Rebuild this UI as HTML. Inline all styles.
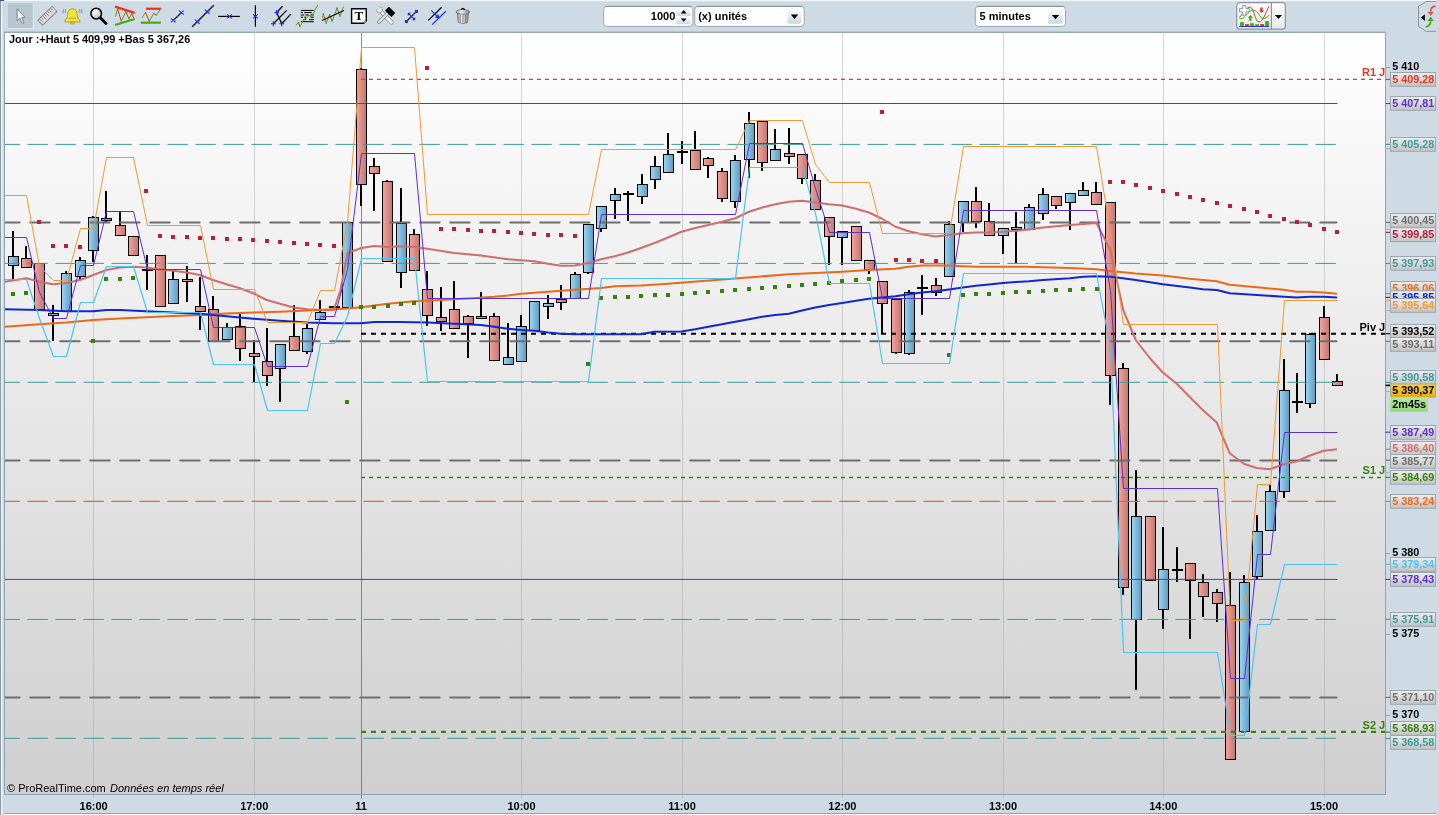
<!DOCTYPE html>
<html lang="fr"><head><meta charset="utf-8"><title>ProRealTime</title>
<style>html,body{margin:0;padding:0;background:#cedbe5;overflow:hidden}body{width:1439px;height:815px;position:relative;font-family:"Liberation Sans",Arial,sans-serif}</style>
</head><body>
<svg width="1439" height="815" viewBox="0 0 1439 815" style="position:absolute;left:0;top:0;will-change:transform" font-family="Liberation Sans, Arial, sans-serif">
<defs>
<linearGradient id="bg" x1="0" y1="0" x2="0" y2="1"><stop offset="0" stop-color="#ffffff"/><stop offset="1" stop-color="#cfcfcf"/></linearGradient>
<linearGradient id="gb" x1="0" y1="0" x2="1" y2="0"><stop offset="0" stop-color="#9ed6f2"/><stop offset="1" stop-color="#5d9bc1"/></linearGradient>
<linearGradient id="gr" x1="0" y1="0" x2="1" y2="0"><stop offset="0" stop-color="#f3a59e"/><stop offset="1" stop-color="#c17670"/></linearGradient>
<linearGradient id="lab" x1="0" y1="0" x2="0" y2="1"><stop offset="0" stop-color="#ededed"/><stop offset="1" stop-color="#c3c3c3"/></linearGradient>
<linearGradient id="btn" x1="0" y1="0" x2="0" y2="1"><stop offset="0" stop-color="#ffffff"/><stop offset="1" stop-color="#f2f2f2"/></linearGradient>
<clipPath id="cc"><rect x="4.5" y="32.5" width="1381.0" height="762.0"/></clipPath>
</defs>
<rect x="0" y="0" width="1439" height="815" fill="#cedbe5"/>
<rect x="4.5" y="32.5" width="1381.0" height="762.0" fill="url(#bg)"/>
<line x1="93.5" y1="32.5" x2="93.5" y2="798.5" stroke="#9a9a9a" stroke-opacity="0.4" stroke-width="1"/>
<line x1="254.5" y1="32.5" x2="254.5" y2="798.5" stroke="#9a9a9a" stroke-opacity="0.4" stroke-width="1"/>
<line x1="361.5" y1="32.5" x2="361.5" y2="798.5" stroke="#5a5a5a" stroke-opacity="0.68" stroke-width="1"/>
<line x1="521.5" y1="32.5" x2="521.5" y2="798.5" stroke="#9a9a9a" stroke-opacity="0.4" stroke-width="1"/>
<line x1="682.5" y1="32.5" x2="682.5" y2="798.5" stroke="#9a9a9a" stroke-opacity="0.4" stroke-width="1"/>
<line x1="842.5" y1="32.5" x2="842.5" y2="798.5" stroke="#9a9a9a" stroke-opacity="0.4" stroke-width="1"/>
<line x1="1003.5" y1="32.5" x2="1003.5" y2="798.5" stroke="#9a9a9a" stroke-opacity="0.4" stroke-width="1"/>
<line x1="1163.5" y1="32.5" x2="1163.5" y2="798.5" stroke="#9a9a9a" stroke-opacity="0.4" stroke-width="1"/>
<line x1="1324.5" y1="32.5" x2="1324.5" y2="798.5" stroke="#9a9a9a" stroke-opacity="0.4" stroke-width="1"/>
<g clip-path="url(#cc)">
<line x1="13" y1="231" x2="13" y2="279" stroke="#000" stroke-width="2"/>
<rect x="8.5" y="256.5" width="10" height="9.0" fill="url(#gb)" stroke="#000" stroke-width="1"/>
<line x1="26" y1="246" x2="26" y2="268" stroke="#000" stroke-width="2"/>
<rect x="21.5" y="258.5" width="10" height="9.0" fill="url(#gr)" stroke="#000" stroke-width="1"/>
<line x1="39" y1="264" x2="39" y2="309" stroke="#000" stroke-width="2"/>
<rect x="34.5" y="263.5" width="10" height="46.0" fill="url(#gr)" stroke="#000" stroke-width="1"/>
<line x1="53" y1="305" x2="53" y2="341" stroke="#000" stroke-width="2"/>
<rect x="48.5" y="313.5" width="10" height="2.0" fill="url(#gb)" stroke="#000" stroke-width="1"/>
<line x1="66" y1="271" x2="66" y2="311" stroke="#000" stroke-width="2"/>
<rect x="61.5" y="273.5" width="10" height="38.0" fill="url(#gb)" stroke="#000" stroke-width="1"/>
<line x1="80" y1="257" x2="80" y2="280" stroke="#000" stroke-width="2"/>
<rect x="75.5" y="260.5" width="10" height="16.0" fill="url(#gb)" stroke="#000" stroke-width="1"/>
<line x1="93" y1="216" x2="93" y2="262" stroke="#000" stroke-width="2"/>
<rect x="88.5" y="217.5" width="10" height="33.0" fill="url(#gb)" stroke="#000" stroke-width="1"/>
<line x1="106" y1="191" x2="106" y2="222" stroke="#000" stroke-width="2"/>
<rect x="101.5" y="218.5" width="10" height="2.0" fill="url(#gr)" stroke="#000" stroke-width="1"/>
<line x1="120" y1="212" x2="120" y2="236" stroke="#000" stroke-width="2"/>
<rect x="115.5" y="225.5" width="10" height="10.0" fill="url(#gr)" stroke="#000" stroke-width="1"/>
<line x1="133" y1="236" x2="133" y2="255" stroke="#000" stroke-width="2"/>
<rect x="128.5" y="236.5" width="10" height="19.0" fill="url(#gr)" stroke="#000" stroke-width="1"/>
<line x1="147" y1="255" x2="147" y2="290" stroke="#000" stroke-width="2"/>
<rect x="142" y="269" width="11" height="2" fill="#000"/>
<line x1="160" y1="255" x2="160" y2="306" stroke="#000" stroke-width="2"/>
<rect x="155.5" y="255.5" width="10" height="51.0" fill="url(#gr)" stroke="#000" stroke-width="1"/>
<line x1="173" y1="270" x2="173" y2="303" stroke="#000" stroke-width="2"/>
<rect x="168.5" y="279.5" width="10" height="24.0" fill="url(#gb)" stroke="#000" stroke-width="1"/>
<line x1="187" y1="266" x2="187" y2="302" stroke="#000" stroke-width="2"/>
<rect x="182.5" y="279.5" width="10" height="2.0" fill="url(#gr)" stroke="#000" stroke-width="1"/>
<line x1="200" y1="277" x2="200" y2="330" stroke="#000" stroke-width="2"/>
<rect x="195.5" y="306.5" width="10" height="5.0" fill="url(#gr)" stroke="#000" stroke-width="1"/>
<line x1="213" y1="296" x2="213" y2="342" stroke="#000" stroke-width="2"/>
<rect x="208.5" y="309.5" width="10" height="32.0" fill="url(#gr)" stroke="#000" stroke-width="1"/>
<line x1="227" y1="323" x2="227" y2="339" stroke="#000" stroke-width="2"/>
<rect x="222.5" y="327.5" width="10" height="12.0" fill="url(#gb)" stroke="#000" stroke-width="1"/>
<line x1="240" y1="314" x2="240" y2="361" stroke="#000" stroke-width="2"/>
<rect x="235.5" y="326.5" width="10" height="22.0" fill="url(#gr)" stroke="#000" stroke-width="1"/>
<line x1="254" y1="340" x2="254" y2="382" stroke="#000" stroke-width="2"/>
<rect x="249.5" y="353.5" width="10" height="3.0" fill="url(#gr)" stroke="#000" stroke-width="1"/>
<line x1="267" y1="328" x2="267" y2="386" stroke="#000" stroke-width="2"/>
<rect x="262.5" y="361.5" width="10" height="14.0" fill="url(#gr)" stroke="#000" stroke-width="1"/>
<line x1="280" y1="344" x2="280" y2="402" stroke="#000" stroke-width="2"/>
<rect x="275.5" y="344.5" width="10" height="24.0" fill="url(#gb)" stroke="#000" stroke-width="1"/>
<line x1="294" y1="305" x2="294" y2="350" stroke="#000" stroke-width="2"/>
<rect x="289.5" y="336.5" width="10" height="14.0" fill="url(#gr)" stroke="#000" stroke-width="1"/>
<line x1="307" y1="324" x2="307" y2="354" stroke="#000" stroke-width="2"/>
<rect x="302.5" y="328.5" width="10" height="23.0" fill="url(#gb)" stroke="#000" stroke-width="1"/>
<line x1="320" y1="300" x2="320" y2="319" stroke="#000" stroke-width="2"/>
<rect x="315.5" y="312.5" width="10" height="7.0" fill="url(#gb)" stroke="#000" stroke-width="1"/>
<rect x="329" y="306" width="11" height="2" fill="#000"/>
<line x1="347" y1="222" x2="347" y2="307" stroke="#000" stroke-width="2"/>
<rect x="342.5" y="222.5" width="10" height="85.0" fill="url(#gb)" stroke="#000" stroke-width="1"/>
<line x1="361" y1="68" x2="361" y2="206" stroke="#000" stroke-width="2"/>
<rect x="356.5" y="69.5" width="10" height="115.0" fill="url(#gr)" stroke="#000" stroke-width="1"/>
<line x1="374" y1="158" x2="374" y2="211" stroke="#000" stroke-width="2"/>
<rect x="369.5" y="166.5" width="10" height="7.0" fill="url(#gr)" stroke="#000" stroke-width="1"/>
<line x1="387" y1="180" x2="387" y2="261" stroke="#000" stroke-width="2"/>
<rect x="382.5" y="181.5" width="10" height="80.0" fill="url(#gr)" stroke="#000" stroke-width="1"/>
<line x1="401" y1="188" x2="401" y2="288" stroke="#000" stroke-width="2"/>
<rect x="396.5" y="223.5" width="10" height="49.0" fill="url(#gb)" stroke="#000" stroke-width="1"/>
<line x1="414" y1="229" x2="414" y2="270" stroke="#000" stroke-width="2"/>
<rect x="409.5" y="234.5" width="10" height="36.0" fill="url(#gr)" stroke="#000" stroke-width="1"/>
<line x1="427" y1="271" x2="427" y2="326" stroke="#000" stroke-width="2"/>
<rect x="422.5" y="289.5" width="10" height="26.0" fill="url(#gr)" stroke="#000" stroke-width="1"/>
<line x1="441" y1="287" x2="441" y2="331" stroke="#000" stroke-width="2"/>
<rect x="436.5" y="317.5" width="10" height="4.0" fill="url(#gr)" stroke="#000" stroke-width="1"/>
<line x1="454" y1="281" x2="454" y2="328" stroke="#000" stroke-width="2"/>
<rect x="449.5" y="309.5" width="10" height="19.0" fill="url(#gr)" stroke="#000" stroke-width="1"/>
<line x1="468" y1="315" x2="468" y2="358" stroke="#000" stroke-width="2"/>
<rect x="463.5" y="316.5" width="10" height="7.0" fill="url(#gr)" stroke="#000" stroke-width="1"/>
<line x1="481" y1="292" x2="481" y2="318" stroke="#000" stroke-width="2"/>
<rect x="476.5" y="316.5" width="10" height="2.0" fill="url(#gr)" stroke="#000" stroke-width="1"/>
<line x1="494" y1="313" x2="494" y2="360" stroke="#000" stroke-width="2"/>
<rect x="489.5" y="316.5" width="10" height="44.0" fill="url(#gr)" stroke="#000" stroke-width="1"/>
<line x1="508" y1="323" x2="508" y2="364" stroke="#000" stroke-width="2"/>
<rect x="503.5" y="357.5" width="10" height="7.0" fill="url(#gb)" stroke="#000" stroke-width="1"/>
<line x1="521" y1="315" x2="521" y2="361" stroke="#000" stroke-width="2"/>
<rect x="516.5" y="326.5" width="10" height="35.0" fill="url(#gb)" stroke="#000" stroke-width="1"/>
<line x1="534" y1="301" x2="534" y2="330" stroke="#000" stroke-width="2"/>
<rect x="529.5" y="301.5" width="10" height="29.0" fill="url(#gb)" stroke="#000" stroke-width="1"/>
<line x1="548" y1="295" x2="548" y2="319" stroke="#000" stroke-width="2"/>
<rect x="543.5" y="303.5" width="10" height="3.0" fill="url(#gb)" stroke="#000" stroke-width="1"/>
<line x1="561" y1="285" x2="561" y2="310" stroke="#000" stroke-width="2"/>
<rect x="556.5" y="299.5" width="10" height="3.0" fill="url(#gr)" stroke="#000" stroke-width="1"/>
<line x1="575" y1="272" x2="575" y2="298" stroke="#000" stroke-width="2"/>
<rect x="570.5" y="274.5" width="10" height="24.0" fill="url(#gb)" stroke="#000" stroke-width="1"/>
<line x1="588" y1="224" x2="588" y2="274" stroke="#000" stroke-width="2"/>
<rect x="583.5" y="224.5" width="10" height="48.0" fill="url(#gb)" stroke="#000" stroke-width="1"/>
<line x1="601" y1="206" x2="601" y2="232" stroke="#000" stroke-width="2"/>
<rect x="596.5" y="206.5" width="10" height="22.0" fill="url(#gb)" stroke="#000" stroke-width="1"/>
<line x1="615" y1="188" x2="615" y2="219" stroke="#000" stroke-width="2"/>
<rect x="610.5" y="194.5" width="10" height="6.0" fill="url(#gb)" stroke="#000" stroke-width="1"/>
<line x1="628" y1="191" x2="628" y2="221" stroke="#000" stroke-width="2"/>
<rect x="623" y="193" width="11" height="2" fill="#000"/>
<line x1="642" y1="174" x2="642" y2="204" stroke="#000" stroke-width="2"/>
<rect x="637.5" y="184.5" width="10" height="12.0" fill="url(#gb)" stroke="#000" stroke-width="1"/>
<line x1="655" y1="156" x2="655" y2="189" stroke="#000" stroke-width="2"/>
<rect x="650.5" y="166.5" width="10" height="13.0" fill="url(#gb)" stroke="#000" stroke-width="1"/>
<line x1="668" y1="133" x2="668" y2="172" stroke="#000" stroke-width="2"/>
<rect x="663.5" y="154.5" width="10" height="18.0" fill="url(#gb)" stroke="#000" stroke-width="1"/>
<line x1="682" y1="141" x2="682" y2="164" stroke="#000" stroke-width="2"/>
<rect x="677" y="151" width="11" height="2" fill="#000"/>
<line x1="695" y1="131" x2="695" y2="169" stroke="#000" stroke-width="2"/>
<rect x="690.5" y="150.5" width="10" height="19.0" fill="url(#gr)" stroke="#000" stroke-width="1"/>
<line x1="708" y1="157" x2="708" y2="178" stroke="#000" stroke-width="2"/>
<rect x="703.5" y="158.5" width="10" height="7.0" fill="url(#gr)" stroke="#000" stroke-width="1"/>
<line x1="722" y1="168" x2="722" y2="202" stroke="#000" stroke-width="2"/>
<rect x="717.5" y="171.5" width="10" height="27.0" fill="url(#gr)" stroke="#000" stroke-width="1"/>
<line x1="735" y1="155" x2="735" y2="208" stroke="#000" stroke-width="2"/>
<rect x="730.5" y="160.5" width="10" height="41.0" fill="url(#gb)" stroke="#000" stroke-width="1"/>
<line x1="749" y1="112" x2="749" y2="178" stroke="#000" stroke-width="2"/>
<rect x="744.5" y="123.5" width="10" height="36.0" fill="url(#gb)" stroke="#000" stroke-width="1"/>
<line x1="762" y1="121" x2="762" y2="171" stroke="#000" stroke-width="2"/>
<rect x="757.5" y="121.5" width="10" height="41.0" fill="url(#gr)" stroke="#000" stroke-width="1"/>
<line x1="775" y1="129" x2="775" y2="160" stroke="#000" stroke-width="2"/>
<rect x="770.5" y="149.5" width="10" height="11.0" fill="url(#gb)" stroke="#000" stroke-width="1"/>
<line x1="789" y1="128" x2="789" y2="164" stroke="#000" stroke-width="2"/>
<rect x="784.5" y="153.5" width="10" height="3.0" fill="url(#gr)" stroke="#000" stroke-width="1"/>
<line x1="802" y1="154" x2="802" y2="184" stroke="#000" stroke-width="2"/>
<rect x="797.5" y="154.5" width="10" height="24.0" fill="url(#gr)" stroke="#000" stroke-width="1"/>
<line x1="815" y1="174" x2="815" y2="209" stroke="#000" stroke-width="2"/>
<rect x="810.5" y="180.5" width="10" height="29.0" fill="url(#gr)" stroke="#000" stroke-width="1"/>
<line x1="829" y1="217" x2="829" y2="265" stroke="#000" stroke-width="2"/>
<rect x="824.5" y="217.5" width="10" height="19.0" fill="url(#gr)" stroke="#000" stroke-width="1"/>
<line x1="842" y1="231" x2="842" y2="265" stroke="#000" stroke-width="2"/>
<rect x="837.5" y="231.5" width="10" height="6.0" fill="url(#gb)" stroke="#000" stroke-width="1"/>
<line x1="856" y1="226" x2="856" y2="260" stroke="#000" stroke-width="2"/>
<rect x="851.5" y="226.5" width="10" height="34.0" fill="url(#gr)" stroke="#000" stroke-width="1"/>
<line x1="869" y1="260" x2="869" y2="274" stroke="#000" stroke-width="2"/>
<rect x="864.5" y="260.5" width="10" height="9.0" fill="url(#gr)" stroke="#000" stroke-width="1"/>
<line x1="882" y1="281" x2="882" y2="334" stroke="#000" stroke-width="2"/>
<rect x="877.5" y="281.5" width="10" height="22.0" fill="url(#gr)" stroke="#000" stroke-width="1"/>
<line x1="896" y1="299" x2="896" y2="354" stroke="#000" stroke-width="2"/>
<rect x="891.5" y="299.5" width="10" height="53.0" fill="url(#gr)" stroke="#000" stroke-width="1"/>
<line x1="909" y1="290" x2="909" y2="355" stroke="#000" stroke-width="2"/>
<rect x="904.5" y="292.5" width="10" height="61.0" fill="url(#gb)" stroke="#000" stroke-width="1"/>
<line x1="922" y1="275" x2="922" y2="315" stroke="#000" stroke-width="2"/>
<rect x="917" y="287" width="11" height="2" fill="#000"/>
<line x1="936" y1="278" x2="936" y2="296" stroke="#000" stroke-width="2"/>
<rect x="931.5" y="285.5" width="10" height="7.0" fill="url(#gr)" stroke="#000" stroke-width="1"/>
<line x1="949" y1="221" x2="949" y2="276" stroke="#000" stroke-width="2"/>
<rect x="944.5" y="224.5" width="10" height="52.0" fill="url(#gb)" stroke="#000" stroke-width="1"/>
<line x1="963" y1="201" x2="963" y2="232" stroke="#000" stroke-width="2"/>
<rect x="958.5" y="201.5" width="10" height="21.0" fill="url(#gb)" stroke="#000" stroke-width="1"/>
<line x1="976" y1="187" x2="976" y2="228" stroke="#000" stroke-width="2"/>
<rect x="971.5" y="201.5" width="10" height="20.0" fill="url(#gr)" stroke="#000" stroke-width="1"/>
<line x1="989" y1="203" x2="989" y2="235" stroke="#000" stroke-width="2"/>
<rect x="984.5" y="221.5" width="10" height="14.0" fill="url(#gr)" stroke="#000" stroke-width="1"/>
<line x1="1003" y1="228" x2="1003" y2="254" stroke="#000" stroke-width="2"/>
<rect x="998.5" y="228.5" width="10" height="7.0" fill="url(#gb)" stroke="#000" stroke-width="1"/>
<line x1="1016" y1="212" x2="1016" y2="263" stroke="#000" stroke-width="2"/>
<rect x="1011.5" y="227.5" width="10" height="2.0" fill="url(#gb)" stroke="#000" stroke-width="1"/>
<line x1="1029" y1="204" x2="1029" y2="229" stroke="#000" stroke-width="2"/>
<rect x="1024.5" y="207.5" width="10" height="22.0" fill="url(#gb)" stroke="#000" stroke-width="1"/>
<line x1="1043" y1="188" x2="1043" y2="220" stroke="#000" stroke-width="2"/>
<rect x="1038.5" y="194.5" width="10" height="19.0" fill="url(#gb)" stroke="#000" stroke-width="1"/>
<line x1="1056" y1="196" x2="1056" y2="209" stroke="#000" stroke-width="2"/>
<rect x="1051.5" y="196.5" width="10" height="9.0" fill="url(#gr)" stroke="#000" stroke-width="1"/>
<line x1="1070" y1="194" x2="1070" y2="230" stroke="#000" stroke-width="2"/>
<rect x="1065.5" y="193.5" width="10" height="9.0" fill="url(#gb)" stroke="#000" stroke-width="1"/>
<line x1="1083" y1="182" x2="1083" y2="195" stroke="#000" stroke-width="2"/>
<rect x="1078.5" y="190.5" width="10" height="5.0" fill="url(#gb)" stroke="#000" stroke-width="1"/>
<line x1="1096" y1="182" x2="1096" y2="204" stroke="#000" stroke-width="2"/>
<rect x="1091.5" y="192.5" width="10" height="12.0" fill="url(#gr)" stroke="#000" stroke-width="1"/>
<line x1="1110" y1="202" x2="1110" y2="405" stroke="#000" stroke-width="2"/>
<rect x="1105.5" y="202.5" width="10" height="173.0" fill="url(#gr)" stroke="#000" stroke-width="1"/>
<line x1="1123" y1="363" x2="1123" y2="595" stroke="#000" stroke-width="2"/>
<rect x="1118.5" y="368.5" width="10" height="219.0" fill="url(#gr)" stroke="#000" stroke-width="1"/>
<line x1="1136" y1="470" x2="1136" y2="690" stroke="#000" stroke-width="2"/>
<rect x="1131.5" y="516.5" width="10" height="103.0" fill="url(#gb)" stroke="#000" stroke-width="1"/>
<line x1="1150" y1="516" x2="1150" y2="580" stroke="#000" stroke-width="2"/>
<rect x="1145.5" y="516.5" width="10" height="64.0" fill="url(#gr)" stroke="#000" stroke-width="1"/>
<line x1="1163" y1="527" x2="1163" y2="629" stroke="#000" stroke-width="2"/>
<rect x="1158.5" y="569.5" width="10" height="40.0" fill="url(#gb)" stroke="#000" stroke-width="1"/>
<line x1="1177" y1="547" x2="1177" y2="582" stroke="#000" stroke-width="2"/>
<rect x="1172" y="569" width="11" height="2" fill="#000"/>
<line x1="1190" y1="563" x2="1190" y2="639" stroke="#000" stroke-width="2"/>
<rect x="1185.5" y="563.5" width="10" height="17.0" fill="url(#gr)" stroke="#000" stroke-width="1"/>
<line x1="1203" y1="574" x2="1203" y2="617" stroke="#000" stroke-width="2"/>
<rect x="1198.5" y="582.5" width="10" height="14.0" fill="url(#gr)" stroke="#000" stroke-width="1"/>
<line x1="1217" y1="589" x2="1217" y2="622" stroke="#000" stroke-width="2"/>
<rect x="1212.5" y="592.5" width="10" height="11.0" fill="url(#gr)" stroke="#000" stroke-width="1"/>
<line x1="1230" y1="572" x2="1230" y2="759" stroke="#000" stroke-width="2"/>
<rect x="1225.5" y="605.5" width="10" height="154.0" fill="url(#gr)" stroke="#000" stroke-width="1"/>
<line x1="1244" y1="575" x2="1244" y2="731" stroke="#000" stroke-width="2"/>
<rect x="1239.5" y="582.5" width="10" height="149.0" fill="url(#gb)" stroke="#000" stroke-width="1"/>
<line x1="1257" y1="515" x2="1257" y2="580" stroke="#000" stroke-width="2"/>
<rect x="1252.5" y="531.5" width="10" height="45.0" fill="url(#gb)" stroke="#000" stroke-width="1"/>
<line x1="1270" y1="485" x2="1270" y2="530" stroke="#000" stroke-width="2"/>
<rect x="1265.5" y="491.5" width="10" height="39.0" fill="url(#gb)" stroke="#000" stroke-width="1"/>
<line x1="1284" y1="359" x2="1284" y2="498" stroke="#000" stroke-width="2"/>
<rect x="1279.5" y="390.5" width="10" height="101.0" fill="url(#gb)" stroke="#000" stroke-width="1"/>
<line x1="1297" y1="373" x2="1297" y2="413" stroke="#000" stroke-width="2"/>
<rect x="1292" y="401" width="11" height="2" fill="#000"/>
<line x1="1310" y1="333" x2="1310" y2="408" stroke="#000" stroke-width="2"/>
<rect x="1305.5" y="334.5" width="10" height="69.0" fill="url(#gb)" stroke="#000" stroke-width="1"/>
<line x1="1324" y1="306" x2="1324" y2="360" stroke="#000" stroke-width="2"/>
<rect x="1319.5" y="317.5" width="10" height="42.0" fill="url(#gr)" stroke="#000" stroke-width="1"/>
<line x1="1337" y1="374" x2="1337" y2="386" stroke="#000" stroke-width="2"/>
<rect x="1332.5" y="381.5" width="10" height="4.0" fill="url(#gr)" stroke="#000" stroke-width="1"/>
<line x1="0.2" y1="222.4" x2="1336.5" y2="222.4" stroke="#6e6e6e" stroke-width="2" stroke-linecap="round" stroke-dasharray="19.4 10.6"/>
<line x1="0.2" y1="341.3" x2="1336.5" y2="341.3" stroke="#6e6e6e" stroke-width="2" stroke-linecap="round" stroke-dasharray="19.4 10.6"/>
<line x1="0.2" y1="460.5" x2="1336.5" y2="460.5" stroke="#6e6e6e" stroke-width="2" stroke-linecap="round" stroke-dasharray="19.4 10.6"/>
<line x1="0.2" y1="697.5" x2="1336.5" y2="697.5" stroke="#6e6e6e" stroke-width="2" stroke-linecap="round" stroke-dasharray="19.4 10.6"/>
<line x1="-0.6" y1="144.4" x2="1337.5" y2="144.4" stroke="#3a9c9c" stroke-width="1.0" stroke-linecap="butt" stroke-dasharray="20.5 7.5"/>
<line x1="-0.6" y1="263.4" x2="1337.5" y2="263.4" stroke="#3a9c9c" stroke-width="1.0" stroke-linecap="butt" stroke-dasharray="20.5 7.5"/>
<line x1="-0.6" y1="382.3" x2="1337.5" y2="382.3" stroke="#3a9c9c" stroke-width="1.0" stroke-linecap="butt" stroke-dasharray="20.5 7.5"/>
<line x1="-0.6" y1="619.4" x2="1337.5" y2="619.4" stroke="#3a9c9c" stroke-width="1.0" stroke-linecap="butt" stroke-dasharray="20.5 7.5"/>
<line x1="-0.6" y1="738.3" x2="1337.5" y2="738.3" stroke="#3a9c9c" stroke-width="1.0" stroke-linecap="butt" stroke-dasharray="20.5 7.5"/>
<line x1="-0.6" y1="501.4" x2="1337.5" y2="501.4" stroke="#ea6a1a" stroke-width="1.1" stroke-linecap="butt" stroke-dasharray="20.5 7.5"/>
<line x1="5" y1="103.5" x2="1337.5" y2="103.5" stroke="#5b2fd0" stroke-width="1" stroke-linecap="butt"/>
<line x1="5" y1="579.4" x2="1337.5" y2="579.4" stroke="#5b2fd0" stroke-width="1" stroke-linecap="butt"/>
<line x1="361" y1="79.4" x2="1385.5" y2="79.4" stroke="#e23a22" stroke-width="1.3" stroke-linecap="butt" stroke-dasharray="4 4"/>
<line x1="361" y1="477.45" x2="1385.5" y2="477.45" stroke="#37820f" stroke-width="1.35" stroke-linecap="butt" stroke-dasharray="4 4"/>
<line x1="361" y1="731.9" x2="1385.5" y2="731.9" stroke="#37820f" stroke-width="2.1" stroke-linecap="butt" stroke-dasharray="5 5"/>
<line x1="361" y1="333.7" x2="1385.5" y2="333.7" stroke="#000" stroke-width="2" stroke-linecap="butt" stroke-dasharray="5 5"/>
<polyline points="5.00,281.75 26.50,278.25 39.50,281.75 53.00,284.25 66.25,283.00 80.00,280.00 93.25,275.00 106.50,270.00 120.00,267.50 133.25,266.75 146.25,267.50 160.00,269.50 173.25,270.75 186.75,272.50 200.00,275.00 213.00,280.00 226.50,284.25 240.00,288.25 253.25,293.25 266.75,300.00 280.00,303.75 293.75,307.50 307.00,309.25 320.00,310.00 333.75,310.00 340.50,290.00 347.50,253.00 361.50,248.00 374.25,246.00 387.50,247.00 400.75,246.25 414.25,247.00 427.25,248.75 454.25,253.00 481.00,255.50 508.00,259.25 534.25,261.25 548.00,263.75 561.00,265.75 575.00,265.50 588.00,263.00 601.25,259.25 614.75,256.25 628.00,252.50 641.00,248.00 654.50,243.00 668.00,237.50 681.50,231.75 695.25,228.00 708.25,225.00 722.00,221.75 735.25,218.25 749.00,211.75 762.25,207.50 775.25,204.25 788.75,201.75 802.00,200.75 815.25,202.50 829.00,204.25 842.25,205.50 856.00,208.75 869.00,212.50 882.00,218.75 895.50,226.75 908.75,231.25 922.00,234.25 935.50,236.50 949.00,235.00 962.75,233.25 976.00,232.50 989.00,232.50 1002.75,231.75 1015.75,230.75 1029.00,229.50 1043.00,227.50 1070.00,225.00 1096.50,223.00 1110.25,250.00 1123.25,310.00 1135.75,340.00 1149.75,358.00 1162.75,372.50 1176.75,383.75 1189.75,397.00 1202.75,410.00 1216.75,422.50 1222.50,436.25 1229.75,453.25 1243.75,463.75 1256.75,468.00 1269.75,469.25 1284.00,464.25 1297.00,461.25 1310.00,455.50 1323.75,450.75 1337.00,449.25" fill="none" stroke="#cf6e6e" stroke-width="2" stroke-linejoin="round"/>
<polyline points="5.00,326.75 39.50,324.25 66.25,322.50 93.25,320.00 120.00,318.50 146.25,317.25 173.25,316.00 200.00,315.00 226.50,313.50 253.25,312.50 280.00,311.75 307.00,310.50 333.75,309.25 347.00,308.50 361.25,307.25 387.50,303.75 414.25,301.25 441.00,300.00 468.00,298.50 494.25,296.75 508.00,295.50 521.25,293.75 548.00,291.75 575.00,289.75 601.25,288.00 614.75,286.25 641.00,285.50 668.00,283.75 690.00,282.00 735.25,278.50 788.75,274.25 842.25,271.75 869.00,270.00 895.50,268.75 908.75,266.75 922.00,265.50 949.00,265.50 962.75,266.25 976.00,266.75 1025.00,266.75 1043.00,267.25 1070.00,268.00 1096.50,269.25 1110.25,271.00 1135.75,273.50 1162.75,275.50 1189.75,278.75 1216.75,281.25 1229.75,284.75 1256.75,287.25 1283.75,289.75 1296.75,291.75 1309.50,291.75 1323.50,292.50 1337.00,293.75" fill="none" stroke="#ea6a1a" stroke-width="2.0" stroke-linejoin="round"/>
<polyline points="5.00,309.25 39.50,310.00 66.25,311.25 93.25,311.25 106.50,310.00 120.00,310.00 146.25,311.25 173.25,312.50 200.00,313.75 226.50,316.25 253.25,318.75 280.00,320.75 307.00,322.50 333.75,323.25 361.25,323.25 374.25,322.00 400.75,322.00 427.25,322.50 454.25,323.75 481.00,325.00 494.25,326.75 508.00,328.75 521.25,330.00 534.25,330.75 548.00,332.50 561.00,333.75 575.00,334.25 601.25,334.25 628.00,334.25 641.00,334.25 654.50,331.75 681.50,331.50 695.25,329.25 708.25,326.75 722.00,324.25 735.25,321.75 749.00,319.25 762.25,316.75 775.25,315.00 788.75,313.75 802.00,310.50 815.25,307.50 829.00,305.00 842.25,303.00 856.00,300.75 869.00,298.75 882.00,297.50 895.50,296.25 908.75,294.25 922.00,292.50 935.50,291.25 949.00,289.50 962.75,287.50 976.00,285.75 989.00,284.50 1002.75,283.00 1015.75,282.00 1029.00,281.25 1043.00,280.00 1070.00,278.25 1083.25,276.75 1096.50,276.25 1110.25,276.75 1122.75,278.25 1135.75,280.00 1162.75,284.25 1189.75,287.50 1202.75,289.25 1216.75,290.00 1229.75,293.25 1256.75,295.00 1283.75,296.75 1296.75,297.50 1309.50,296.75 1323.50,296.75 1337.00,297.50" fill="none" stroke="#1028cc" stroke-width="2.1" stroke-linejoin="round"/>
<rect x="37" y="220" width="4" height="4" fill="#b5213b"/>
<rect x="51" y="244" width="4" height="4" fill="#b5213b"/>
<rect x="64" y="244" width="4" height="4" fill="#b5213b"/>
<rect x="78" y="245" width="4" height="4" fill="#b5213b"/>
<rect x="144" y="189" width="4" height="4" fill="#b5213b"/>
<rect x="158" y="234" width="4" height="4" fill="#b5213b"/>
<rect x="171" y="235" width="4" height="4" fill="#b5213b"/>
<rect x="185" y="235" width="4" height="4" fill="#b5213b"/>
<rect x="198" y="236" width="4" height="4" fill="#b5213b"/>
<rect x="211" y="236" width="4" height="4" fill="#b5213b"/>
<rect x="225" y="237" width="4" height="4" fill="#b5213b"/>
<rect x="238" y="237" width="4" height="4" fill="#b5213b"/>
<rect x="251" y="238" width="4" height="4" fill="#b5213b"/>
<rect x="265" y="239" width="4" height="4" fill="#b5213b"/>
<rect x="278" y="240" width="4" height="4" fill="#b5213b"/>
<rect x="292" y="241" width="4" height="4" fill="#b5213b"/>
<rect x="305" y="242" width="4" height="4" fill="#b5213b"/>
<rect x="318" y="243" width="4" height="4" fill="#b5213b"/>
<rect x="332" y="244" width="4" height="4" fill="#b5213b"/>
<rect x="425" y="66" width="4" height="4" fill="#b5213b"/>
<rect x="439" y="227" width="4" height="4" fill="#b5213b"/>
<rect x="452" y="227" width="4" height="4" fill="#b5213b"/>
<rect x="466" y="228" width="4" height="4" fill="#b5213b"/>
<rect x="479" y="229" width="4" height="4" fill="#b5213b"/>
<rect x="492" y="229" width="4" height="4" fill="#b5213b"/>
<rect x="506" y="230" width="4" height="4" fill="#b5213b"/>
<rect x="519" y="231" width="4" height="4" fill="#b5213b"/>
<rect x="532" y="232" width="4" height="4" fill="#b5213b"/>
<rect x="546" y="233" width="4" height="4" fill="#b5213b"/>
<rect x="559" y="233" width="4" height="4" fill="#b5213b"/>
<rect x="573" y="234" width="4" height="4" fill="#b5213b"/>
<rect x="880" y="110" width="4" height="4" fill="#b5213b"/>
<rect x="894" y="258" width="4" height="4" fill="#b5213b"/>
<rect x="907" y="258" width="4" height="4" fill="#b5213b"/>
<rect x="920" y="259" width="4" height="4" fill="#b5213b"/>
<rect x="934" y="259" width="4" height="4" fill="#b5213b"/>
<rect x="1108" y="180" width="4" height="4" fill="#b5213b"/>
<rect x="1121" y="180" width="4" height="4" fill="#b5213b"/>
<rect x="1134" y="183" width="4" height="4" fill="#b5213b"/>
<rect x="1148" y="186" width="4" height="4" fill="#b5213b"/>
<rect x="1161" y="189" width="4" height="4" fill="#b5213b"/>
<rect x="1175" y="192" width="4" height="4" fill="#b5213b"/>
<rect x="1188" y="195" width="4" height="4" fill="#b5213b"/>
<rect x="1201" y="198" width="4" height="4" fill="#b5213b"/>
<rect x="1215" y="201" width="4" height="4" fill="#b5213b"/>
<rect x="1228" y="204" width="4" height="4" fill="#b5213b"/>
<rect x="1242" y="207" width="4" height="4" fill="#b5213b"/>
<rect x="1255" y="210" width="4" height="4" fill="#b5213b"/>
<rect x="1268" y="214" width="4" height="4" fill="#b5213b"/>
<rect x="1282" y="217" width="4" height="4" fill="#b5213b"/>
<rect x="1295" y="220" width="4" height="4" fill="#b5213b"/>
<rect x="1308" y="223" width="4" height="4" fill="#b5213b"/>
<rect x="1322" y="227" width="4" height="4" fill="#b5213b"/>
<rect x="1335" y="230" width="4" height="4" fill="#b5213b"/>
<rect x="11" y="292" width="4" height="4" fill="#37820f"/>
<rect x="24" y="291" width="4" height="4" fill="#37820f"/>
<rect x="91" y="339" width="4" height="4" fill="#37820f"/>
<rect x="104" y="277" width="4" height="4" fill="#37820f"/>
<rect x="118" y="277" width="4" height="4" fill="#37820f"/>
<rect x="131" y="276" width="4" height="4" fill="#37820f"/>
<rect x="345" y="400" width="4" height="4" fill="#37820f"/>
<rect x="359" y="305" width="4" height="4" fill="#37820f"/>
<rect x="372" y="305" width="4" height="4" fill="#37820f"/>
<rect x="386" y="304" width="4" height="4" fill="#37820f"/>
<rect x="399" y="302" width="4" height="4" fill="#37820f"/>
<rect x="412" y="301" width="4" height="4" fill="#37820f"/>
<rect x="586" y="362" width="4" height="4" fill="#37820f"/>
<rect x="599" y="296" width="4" height="4" fill="#37820f"/>
<rect x="613" y="295" width="4" height="4" fill="#37820f"/>
<rect x="626" y="295" width="4" height="4" fill="#37820f"/>
<rect x="639" y="294" width="4" height="4" fill="#37820f"/>
<rect x="653" y="293" width="4" height="4" fill="#37820f"/>
<rect x="666" y="293" width="4" height="4" fill="#37820f"/>
<rect x="680" y="292" width="4" height="4" fill="#37820f"/>
<rect x="693" y="291" width="4" height="4" fill="#37820f"/>
<rect x="706" y="290" width="4" height="4" fill="#37820f"/>
<rect x="720" y="289" width="4" height="4" fill="#37820f"/>
<rect x="733" y="288" width="4" height="4" fill="#37820f"/>
<rect x="747" y="287" width="4" height="4" fill="#37820f"/>
<rect x="760" y="286" width="4" height="4" fill="#37820f"/>
<rect x="773" y="285" width="4" height="4" fill="#37820f"/>
<rect x="787" y="284" width="4" height="4" fill="#37820f"/>
<rect x="800" y="283" width="4" height="4" fill="#37820f"/>
<rect x="813" y="282" width="4" height="4" fill="#37820f"/>
<rect x="827" y="281" width="4" height="4" fill="#37820f"/>
<rect x="840" y="279" width="4" height="4" fill="#37820f"/>
<rect x="854" y="278" width="4" height="4" fill="#37820f"/>
<rect x="867" y="277" width="4" height="4" fill="#37820f"/>
<rect x="947" y="353" width="4" height="4" fill="#37820f"/>
<rect x="961" y="293" width="4" height="4" fill="#37820f"/>
<rect x="974" y="292" width="4" height="4" fill="#37820f"/>
<rect x="987" y="292" width="4" height="4" fill="#37820f"/>
<rect x="1001" y="291" width="4" height="4" fill="#37820f"/>
<rect x="1014" y="290" width="4" height="4" fill="#37820f"/>
<rect x="1027" y="290" width="4" height="4" fill="#37820f"/>
<rect x="1041" y="289" width="4" height="4" fill="#37820f"/>
<rect x="1054" y="288" width="4" height="4" fill="#37820f"/>
<rect x="1068" y="288" width="4" height="4" fill="#37820f"/>
<rect x="1081" y="287" width="4" height="4" fill="#37820f"/>
<rect x="1095" y="287" width="4" height="4" fill="#37820f"/>
<polyline points="4.82,195.50 26.50,195.50 39.50,266.50 53.50,280.50 66.50,280.50 80.50,228.50 93.50,228.50 106.50,157.50 133.50,157.50 147.50,225.50 200.50,225.50 213.50,289.50 254.50,289.50 267.50,322.50 307.50,322.50 320.50,290.50 334.50,290.50 347.50,222.50 361.50,47.50 414.50,47.50 427.50,214.50 588.50,214.50 601.50,149.50 735.50,149.50 749.50,120.50 802.50,120.50 815.50,164.50 829.50,182.50 869.50,182.50 882.50,233.50 949.50,233.50 963.50,146.50 1096.50,146.50 1110.50,233.50 1123.50,324.50 1217.50,324.50 1230.50,620.50 1244.50,620.50 1257.50,484.50 1270.50,484.50 1284.50,300.50 1337.50,300.50" fill="none" stroke="#f09a32" stroke-width="1" stroke-linejoin="round"/>
<polyline points="4.82,279.50 26.50,279.50 39.50,318.50 53.50,356.50 66.50,356.50 80.50,302.50 93.50,302.50 106.50,266.50 133.50,266.50 147.50,312.50 200.50,312.50 213.50,364.50 254.50,364.50 267.50,410.50 307.50,410.50 320.50,343.50 334.50,343.50 347.50,316.50 361.50,258.50 414.50,258.50 427.50,381.50 588.50,381.50 601.50,278.50 735.50,278.50 749.50,167.50 802.50,167.50 815.50,213.50 829.50,283.50 869.50,283.50 882.50,363.50 949.50,363.50 963.50,273.50 1096.50,273.50 1110.50,348.50 1123.50,652.50 1217.50,652.50 1230.50,735.50 1244.50,735.50 1257.50,624.50 1270.50,624.50 1284.50,564.50 1337.50,564.50" fill="none" stroke="#4cc3f3" stroke-width="1.2" stroke-linejoin="round"/>
<polyline points="4.82,237.50 26.50,237.50 39.50,292.50 53.50,318.50 66.50,318.50 80.50,265.50 93.50,265.50 106.50,211.50 133.50,211.50 147.50,269.50 200.50,269.50 213.50,327.50 254.50,327.50 267.50,366.50 307.50,366.50 320.50,316.50 334.50,316.50 347.50,269.50 361.50,153.50 414.50,153.50 427.50,298.50 588.50,298.50 601.50,214.50 735.50,214.50 749.50,143.50 802.50,143.50 815.50,188.50 829.50,232.50 869.50,232.50 882.50,298.50 949.50,298.50 963.50,210.50 1096.50,210.50 1110.50,290.50 1123.50,488.50 1217.50,488.50 1230.50,678.50 1244.50,678.50 1257.50,554.50 1270.50,554.50 1284.50,432.50 1337.50,432.50" fill="none" stroke="#5b2fd0" stroke-width="1" stroke-linejoin="round"/>
</g>
<rect x="4.5" y="32.5" width="1381.0" height="762.0" fill="none" stroke="#8fa3b3" stroke-width="1"/>
<text x="9" y="43" font-size="11" font-weight="bold" fill="#000" textLength="181.2" lengthAdjust="spacingAndGlyphs">Jour :+Haut 5 409,99 +Bas 5 367,26</text>
<text x="7" y="792" font-size="11" fill="#000">© ProRealTime.com</text>
<text x="110" y="792" font-size="11" font-style="italic" fill="#000">Données en temps réel</text>
<text x="1385.2" y="76" font-size="11" font-weight="bold" fill="#e23a22" text-anchor="end">R1 J</text>
<text x="1385.2" y="331" font-size="11" font-weight="bold" fill="#000" text-anchor="end">Piv J</text>
<text x="1385.2" y="474.2" font-size="11" font-weight="bold" fill="#37820f" text-anchor="end">S1 J</text>
<text x="1385.2" y="729.4" font-size="11" font-weight="bold" fill="#37820f" text-anchor="end">S2 J</text>
<text x="93.6" y="810" font-size="11" font-weight="bold" fill="#000" text-anchor="middle">16:00</text>
<text x="254.2" y="810" font-size="11" font-weight="bold" fill="#000" text-anchor="middle">17:00</text>
<text x="361.1" y="810" font-size="11" font-weight="bold" fill="#000" text-anchor="middle">11</text>
<text x="521.5" y="810" font-size="11" font-weight="bold" fill="#000" text-anchor="middle">10:00</text>
<text x="682" y="810" font-size="11" font-weight="bold" fill="#000" text-anchor="middle">11:00</text>
<text x="842.4" y="810" font-size="11" font-weight="bold" fill="#000" text-anchor="middle">12:00</text>
<text x="1003" y="810" font-size="11" font-weight="bold" fill="#000" text-anchor="middle">13:00</text>
<text x="1163.3" y="810" font-size="11" font-weight="bold" fill="#000" text-anchor="middle">14:00</text>
<text x="1324" y="810" font-size="11" font-weight="bold" fill="#000" text-anchor="middle">15:00</text>
<rect x="4" y="813" width="1432" height="1" fill="#93a3b0"/><rect x="4" y="814" width="1432" height="1" fill="#ffffff"/>
<line x1="1385.5" y1="148.6" x2="1390" y2="148.6" stroke="#a9b6c0" stroke-width="1"/>
<line x1="1385.5" y1="229.6" x2="1390" y2="229.6" stroke="#a9b6c0" stroke-width="1"/>
<line x1="1385.5" y1="310.5" x2="1390" y2="310.5" stroke="#a9b6c0" stroke-width="1"/>
<line x1="1385.5" y1="391.5" x2="1390" y2="391.5" stroke="#a9b6c0" stroke-width="1"/>
<line x1="1385.5" y1="472.4" x2="1390" y2="472.4" stroke="#a9b6c0" stroke-width="1"/>
<line x1="1385.5" y1="67.6" x2="1390" y2="67.6" stroke="#8fa3b3" stroke-width="1"/>
<text x="1392.3" y="69.8" font-size="11" font-weight="bold" fill="#000" textLength="27" lengthAdjust="spacingAndGlyphs">5 410</text>
<line x1="1385.5" y1="553.4" x2="1390" y2="553.4" stroke="#8fa3b3" stroke-width="1"/>
<text x="1392.3" y="555.6" font-size="11" font-weight="bold" fill="#000" textLength="27" lengthAdjust="spacingAndGlyphs">5 380</text>
<line x1="1385.5" y1="634.4" x2="1390" y2="634.4" stroke="#8fa3b3" stroke-width="1"/>
<text x="1392.3" y="636.6" font-size="11" font-weight="bold" fill="#000" textLength="27" lengthAdjust="spacingAndGlyphs">5 375</text>
<line x1="1385.5" y1="715.3" x2="1390" y2="715.3" stroke="#8fa3b3" stroke-width="1"/>
<text x="1392.3" y="717.5" font-size="11" font-weight="bold" fill="#000" textLength="27" lengthAdjust="spacingAndGlyphs">5 370</text>
<line x1="1385.5" y1="79.4" x2="1390" y2="79.4" stroke="#e23a22" stroke-width="1.1"/>
<rect x="1390.5" y="72.5" width="45" height="13.8" fill="url(#lab)" stroke="#9ba6ae" stroke-width="1"/>
<text x="1392.3" y="82.7" font-size="11" font-weight="bold" fill="#e23a22" textLength="42" lengthAdjust="spacingAndGlyphs">5 409,28</text>
<line x1="1385.5" y1="103.5" x2="1390" y2="103.5" stroke="#5b2fd0" stroke-width="1.1"/>
<rect x="1390.5" y="96.5" width="45" height="13.8" fill="url(#lab)" stroke="#9ba6ae" stroke-width="1"/>
<text x="1392.3" y="106.7" font-size="11" font-weight="bold" fill="#5b2fd0" textLength="42" lengthAdjust="spacingAndGlyphs">5 407,81</text>
<line x1="1385.5" y1="144.4" x2="1390" y2="144.4" stroke="#3a9c9c" stroke-width="1.1"/>
<rect x="1390.5" y="137.5" width="45" height="13.8" fill="url(#lab)" stroke="#9ba6ae" stroke-width="1"/>
<text x="1392.3" y="147.7" font-size="11" font-weight="bold" fill="#3a9c9c" textLength="42" lengthAdjust="spacingAndGlyphs">5 405,28</text>
<line x1="1385.5" y1="222.4" x2="1390" y2="222.4" stroke="#6e6e6e" stroke-width="1.1"/>
<rect x="1390.5" y="213.5" width="45" height="13.8" fill="url(#lab)" stroke="#9ba6ae" stroke-width="1"/>
<text x="1392.3" y="223.7" font-size="11" font-weight="bold" fill="#6e6e6e" textLength="42" lengthAdjust="spacingAndGlyphs">5 400,45</text>
<line x1="1385.5" y1="232.4" x2="1390" y2="232.4" stroke="#b5213b" stroke-width="1.1"/>
<rect x="1390.5" y="227.8" width="45" height="13.8" fill="url(#lab)" stroke="#9ba6ae" stroke-width="1"/>
<text x="1392.3" y="238.0" font-size="11" font-weight="bold" fill="#b5213b" textLength="42" lengthAdjust="spacingAndGlyphs">5 399,85</text>
<line x1="1385.5" y1="263.5" x2="1390" y2="263.5" stroke="#3a9c9c" stroke-width="1.1"/>
<rect x="1390.5" y="256.5" width="45" height="13.8" fill="url(#lab)" stroke="#9ba6ae" stroke-width="1"/>
<text x="1392.3" y="266.7" font-size="11" font-weight="bold" fill="#3a9c9c" textLength="42" lengthAdjust="spacingAndGlyphs">5 397,93</text>
<line x1="1385.5" y1="293.4" x2="1390" y2="293.4" stroke="#ea6a1a" stroke-width="1.1"/>
<rect x="1390.5" y="281.5" width="45" height="13.8" fill="url(#lab)" stroke="#9ba6ae" stroke-width="1"/>
<text x="1392.3" y="291.7" font-size="11" font-weight="bold" fill="#ea6a1a" textLength="42" lengthAdjust="spacingAndGlyphs">5 396,06</text>
<line x1="1385.5" y1="297.4" x2="1390" y2="297.4" stroke="#1028cc" stroke-width="1.1"/>
<rect x="1390.5" y="290.7" width="45" height="13.8" fill="url(#lab)" stroke="#9ba6ae" stroke-width="1"/>
<text x="1392.3" y="300.9" font-size="11" font-weight="bold" fill="#1028cc" textLength="42" lengthAdjust="spacingAndGlyphs">5 395,85</text>
<line x1="1385.5" y1="300.7" x2="1390" y2="300.7" stroke="#f09a32" stroke-width="1.1"/>
<rect x="1390.5" y="298.5" width="45" height="13.8" fill="url(#lab)" stroke="#9ba6ae" stroke-width="1"/>
<text x="1392.3" y="308.7" font-size="11" font-weight="bold" fill="#f09a32" textLength="42" lengthAdjust="spacingAndGlyphs">5 395,64</text>
<line x1="1385.5" y1="333.7" x2="1390" y2="333.7" stroke="#000" stroke-width="1.1"/>
<rect x="1390.5" y="324.5" width="45" height="13.8" fill="url(#lab)" stroke="#9ba6ae" stroke-width="1"/>
<text x="1392.3" y="334.7" font-size="11" font-weight="bold" fill="#000" textLength="42" lengthAdjust="spacingAndGlyphs">5 393,52</text>
<line x1="1385.5" y1="341.3" x2="1390" y2="341.3" stroke="#6e6e6e" stroke-width="1.1"/>
<rect x="1390.5" y="337.5" width="45" height="13.8" fill="url(#lab)" stroke="#9ba6ae" stroke-width="1"/>
<text x="1392.3" y="347.7" font-size="11" font-weight="bold" fill="#6e6e6e" textLength="42" lengthAdjust="spacingAndGlyphs">5 393,11</text>
<line x1="1385.5" y1="382.4" x2="1390" y2="382.4" stroke="#3a9c9c" stroke-width="1.1"/>
<rect x="1390.5" y="370.5" width="45" height="13.8" fill="url(#lab)" stroke="#9ba6ae" stroke-width="1"/>
<text x="1392.3" y="380.7" font-size="11" font-weight="bold" fill="#3a9c9c" textLength="42" lengthAdjust="spacingAndGlyphs">5 390,58</text>
<line x1="1385.5" y1="385.4" x2="1390.5" y2="385.4" stroke="#000" stroke-width="1.6"/>
<defs><linearGradient id="yl" x1="0" y1="0" x2="0" y2="1"><stop offset="0" stop-color="#fbd034"/><stop offset="1" stop-color="#e9aa18"/></linearGradient><linearGradient id="gl" x1="0" y1="0" x2="0" y2="1"><stop offset="0" stop-color="#b4e8a0"/><stop offset="1" stop-color="#92d878"/></linearGradient></defs>
<rect x="1390.5" y="384" width="45" height="13.2" fill="url(#yl)" stroke="#9fa3a0" stroke-width="0.8"/>
<text x="1392.3" y="393.6" font-size="11" font-weight="bold" fill="#000" textLength="42" lengthAdjust="spacingAndGlyphs">5 390,37</text>
<rect x="1389.9" y="397.2" width="38.1" height="14.5" fill="url(#gl)"/>
<text x="1392.3" y="408.1" font-size="11" font-weight="bold" fill="#000" textLength="33.8" lengthAdjust="spacingAndGlyphs">2m45s</text>
<line x1="1385.5" y1="432.2" x2="1390" y2="432.2" stroke="#5b2fd0" stroke-width="1.1"/>
<rect x="1390.5" y="425.5" width="45" height="13.8" fill="url(#lab)" stroke="#9ba6ae" stroke-width="1"/>
<text x="1392.3" y="435.7" font-size="11" font-weight="bold" fill="#5b2fd0" textLength="42" lengthAdjust="spacingAndGlyphs">5 387,49</text>
<line x1="1385.5" y1="449.2" x2="1390" y2="449.2" stroke="#cf6e6e" stroke-width="1.1"/>
<rect x="1390.5" y="441.5" width="45" height="13.8" fill="url(#lab)" stroke="#9ba6ae" stroke-width="1"/>
<text x="1392.3" y="451.7" font-size="11" font-weight="bold" fill="#cf6e6e" textLength="42" lengthAdjust="spacingAndGlyphs">5 386,40</text>
<line x1="1385.5" y1="460.2" x2="1390" y2="460.2" stroke="#6e6e6e" stroke-width="1.1"/>
<rect x="1390.5" y="454.5" width="45" height="13.8" fill="url(#lab)" stroke="#9ba6ae" stroke-width="1"/>
<text x="1392.3" y="464.7" font-size="11" font-weight="bold" fill="#6e6e6e" textLength="42" lengthAdjust="spacingAndGlyphs">5 385,77</text>
<line x1="1385.5" y1="477.3" x2="1390" y2="477.3" stroke="#37820f" stroke-width="1.1"/>
<rect x="1390.5" y="470.5" width="45" height="13.8" fill="url(#lab)" stroke="#9ba6ae" stroke-width="1"/>
<text x="1392.3" y="480.7" font-size="11" font-weight="bold" fill="#37820f" textLength="42" lengthAdjust="spacingAndGlyphs">5 384,69</text>
<line x1="1385.5" y1="501.4" x2="1390" y2="501.4" stroke="#ea6a1a" stroke-width="1.1"/>
<rect x="1390.5" y="494.5" width="45" height="13.8" fill="url(#lab)" stroke="#9ba6ae" stroke-width="1"/>
<text x="1392.3" y="504.7" font-size="11" font-weight="bold" fill="#ea6a1a" textLength="42" lengthAdjust="spacingAndGlyphs">5 383,24</text>
<line x1="1385.5" y1="564.3" x2="1390" y2="564.3" stroke="#4cc3f3" stroke-width="1.1"/>
<rect x="1390.5" y="557.5" width="45" height="13.8" fill="url(#lab)" stroke="#9ba6ae" stroke-width="1"/>
<text x="1392.3" y="567.7" font-size="11" font-weight="bold" fill="#4cc3f3" textLength="42" lengthAdjust="spacingAndGlyphs">5 379,34</text>
<line x1="1385.5" y1="579.4" x2="1390" y2="579.4" stroke="#5b2fd0" stroke-width="1.1"/>
<rect x="1390.5" y="572.5" width="45" height="13.8" fill="url(#lab)" stroke="#9ba6ae" stroke-width="1"/>
<text x="1392.3" y="582.7" font-size="11" font-weight="bold" fill="#5b2fd0" textLength="42" lengthAdjust="spacingAndGlyphs">5 378,43</text>
<line x1="1385.5" y1="619.3" x2="1390" y2="619.3" stroke="#3a9c9c" stroke-width="1.1"/>
<rect x="1390.5" y="612.5" width="45" height="13.8" fill="url(#lab)" stroke="#9ba6ae" stroke-width="1"/>
<text x="1392.3" y="622.7" font-size="11" font-weight="bold" fill="#3a9c9c" textLength="42" lengthAdjust="spacingAndGlyphs">5 375,91</text>
<line x1="1385.5" y1="697.4" x2="1390" y2="697.4" stroke="#6e6e6e" stroke-width="1.1"/>
<rect x="1390.5" y="690.5" width="45" height="13.8" fill="url(#lab)" stroke="#9ba6ae" stroke-width="1"/>
<text x="1392.3" y="700.7" font-size="11" font-weight="bold" fill="#6e6e6e" textLength="42" lengthAdjust="spacingAndGlyphs">5 371,10</text>
<line x1="1385.5" y1="732.1" x2="1390" y2="732.1" stroke="#37820f" stroke-width="1.1"/>
<rect x="1390.5" y="721.5" width="45" height="13.8" fill="url(#lab)" stroke="#9ba6ae" stroke-width="1"/>
<text x="1392.3" y="731.7" font-size="11" font-weight="bold" fill="#37820f" textLength="42" lengthAdjust="spacingAndGlyphs">5 368,93</text>
<line x1="1385.5" y1="738.5" x2="1390" y2="738.5" stroke="#3a9c9c" stroke-width="1.1"/>
<rect x="1390.5" y="735.5" width="45" height="13.8" fill="url(#lab)" stroke="#9ba6ae" stroke-width="1"/>
<text x="1392.3" y="745.7" font-size="11" font-weight="bold" fill="#3a9c9c" textLength="42" lengthAdjust="spacingAndGlyphs">5 368,58</text>
<rect x="0" y="0" width="1436" height="1.2" fill="#f4f7f9"/>
<rect x="0" y="0" width="1" height="815" fill="#8797a5"/>
<rect x="1" y="0" width="1.2" height="815" fill="#fbfcfd"/>
<rect x="0" y="0" width="4" height="1" fill="#2a4fb0"/>
<line x1="4" y1="32" x2="1386" y2="32" stroke="#9dadb9" stroke-width="1"/>
<rect x="8" y="3.2" width="25" height="25" fill="#b7c5ce"/>
<path d="M8 28.4H33.2V3.2" fill="none" stroke="#dde6ec" stroke-width="1"/>
<path d="M17.1 8.8V20.6L19.8 18.2L22 23.4L24 22.5L21.8 17.4H25.2Z" fill="#f2f2f2" stroke="#7d848a" stroke-width="1" stroke-linejoin="round"/>
<g transform="translate(47.4,15.8) rotate(-44)"><rect x="-10" y="-3.5" width="20" height="7" fill="#dcdcdc" stroke="#8c8c8c" stroke-width="1"/><line x1="-7.8" y1="-3.5" x2="-7.8" y2="0.8" stroke="#777" stroke-width="0.8"/><line x1="-5.6" y1="-3.5" x2="-5.6" y2="-0.5" stroke="#777" stroke-width="0.8"/><line x1="-3.4" y1="-3.5" x2="-3.4" y2="0.8" stroke="#777" stroke-width="0.8"/><line x1="-1.2" y1="-3.5" x2="-1.2" y2="-0.5" stroke="#777" stroke-width="0.8"/><line x1="1" y1="-3.5" x2="1" y2="0.8" stroke="#777" stroke-width="0.8"/><line x1="3.2" y1="-3.5" x2="3.2" y2="-0.5" stroke="#777" stroke-width="0.8"/><line x1="5.4" y1="-3.5" x2="5.4" y2="0.8" stroke="#777" stroke-width="0.8"/><line x1="7.6" y1="-3.5" x2="7.6" y2="-0.5" stroke="#777" stroke-width="0.8"/></g>
<path d="M72.4 8.8c-3.4 0-4.8 2.7-4.8 5.700 0 3-1 4.400-2.600 5.700v1.800h14.800v-1.800c-1.600-1.300-2.600-2.700-2.600-5.700 0-3-1.400-5.700-4.800-5.700z" fill="#f1e23c" stroke="#a99a14" stroke-width="0.9"/>
<path d="M70.600 22.200h3.600v1.700h-3.600z" fill="#e2d22c" stroke="#a99a14" stroke-width="0.7"/>
<line x1="69" y1="18.200" x2="76" y2="18.200" stroke="#a89a10" stroke-width="0.8"/>
<path d="M63.8 9.200q-1.300 2-.5 4.200M65.800 9.200q-1.100 1.800-.4 3.600M81.200 9.200q1.300 2 .5 4.200M79.200 9.200q1.100 1.800.4 3.600" fill="none" stroke="#6f7a82" stroke-width="0.8"/>
<defs><radialGradient id="mg" cx="0.35" cy="0.3" r="0.8"><stop offset="0" stop-color="#ffffff"/><stop offset="1" stop-color="#b9b9b9"/></radialGradient></defs>
<line x1="100.3" y1="17.800" x2="106" y2="23.600" stroke="#000" stroke-width="2.8" stroke-linecap="round"/>
<circle cx="96.2" cy="13.6" r="5.300" fill="url(#mg)" stroke="#000" stroke-width="1.500"/>
<line x1="115.50" y1="16.25" x2="117.58" y2="8.75" stroke="#3fae12" stroke-width="1" stroke-linecap="round"/>
<line x1="117.58" y1="8.75" x2="121.33" y2="21.25" stroke="#ee2e1a" stroke-width="1" stroke-linecap="round"/>
<line x1="121.33" y1="21.25" x2="125.92" y2="11.67" stroke="#3fae12" stroke-width="1" stroke-linecap="round"/>
<line x1="125.92" y1="11.67" x2="128.83" y2="18.75" stroke="#ee2e1a" stroke-width="1" stroke-linecap="round"/>
<line x1="128.83" y1="18.75" x2="131.75" y2="13.75" stroke="#3fae12" stroke-width="1" stroke-linecap="round"/>
<line x1="131.75" y1="13.75" x2="133.83" y2="17.92" stroke="#ee2e1a" stroke-width="1" stroke-linecap="round"/>
<line x1="115.08" y1="6.67" x2="134.67" y2="12.92" stroke="#ee2e1a" stroke-width="2.2" stroke-linecap="butt"/>
<line x1="115.08" y1="25.00" x2="134.67" y2="19.00" stroke="#3fae12" stroke-width="2.2" stroke-linecap="butt"/>
<line x1="142.17" y1="17.50" x2="145.50" y2="12.50" stroke="#3fae12" stroke-width="1" stroke-linecap="round"/>
<line x1="145.50" y1="12.50" x2="149.25" y2="21.25" stroke="#ee2e1a" stroke-width="1" stroke-linecap="round"/>
<line x1="149.25" y1="21.25" x2="153.83" y2="13.33" stroke="#3fae12" stroke-width="1" stroke-linecap="round"/>
<line x1="153.83" y1="13.33" x2="156.33" y2="15.42" stroke="#ee2e1a" stroke-width="1" stroke-linecap="round"/>
<line x1="156.33" y1="15.42" x2="160.08" y2="9.58" stroke="#3fae12" stroke-width="1" stroke-linecap="round"/>
<line x1="145.92" y1="8.75" x2="160.92" y2="8.75" stroke="#ee2e1a" stroke-width="2.2" stroke-linecap="butt"/>
<line x1="140.92" y1="22.67" x2="160.92" y2="22.67" stroke="#3fae12" stroke-width="2.2" stroke-linecap="butt"/>
<line x1="173.40" y1="20.40" x2="181.30" y2="12.70" stroke="#000" stroke-width="1.2" stroke-linecap="butt"/>
<line x1="170.90" y1="18.36" x2="175.70" y2="22.44" stroke="#1c2cf5" stroke-width="1.1" stroke-linecap="butt"/>
<line x1="170.90" y1="22.44" x2="175.70" y2="18.36" stroke="#1c2cf5" stroke-width="1.1" stroke-linecap="butt"/>
<line x1="179.00" y1="10.56" x2="183.80" y2="14.64" stroke="#1c2cf5" stroke-width="1.1" stroke-linecap="butt"/>
<line x1="179.00" y1="14.64" x2="183.80" y2="10.56" stroke="#1c2cf5" stroke-width="1.1" stroke-linecap="butt"/>
<line x1="192.20" y1="26.70" x2="213.80" y2="5.20" stroke="#000" stroke-width="1.2" stroke-linecap="butt"/>
<line x1="194.90" y1="19.66" x2="199.70" y2="23.74" stroke="#1c2cf5" stroke-width="1.1" stroke-linecap="butt"/>
<line x1="194.90" y1="23.74" x2="199.70" y2="19.66" stroke="#1c2cf5" stroke-width="1.1" stroke-linecap="butt"/>
<line x1="204.80" y1="9.66" x2="209.60" y2="13.74" stroke="#1c2cf5" stroke-width="1.1" stroke-linecap="butt"/>
<line x1="204.80" y1="13.74" x2="209.60" y2="9.66" stroke="#1c2cf5" stroke-width="1.1" stroke-linecap="butt"/>
<line x1="218.20" y1="16.40" x2="239.80" y2="16.40" stroke="#000" stroke-width="1.2" stroke-linecap="butt"/>
<line x1="227.20" y1="14.36" x2="232.00" y2="18.44" stroke="#1c2cf5" stroke-width="1.1" stroke-linecap="butt"/>
<line x1="227.20" y1="18.44" x2="232.00" y2="14.36" stroke="#1c2cf5" stroke-width="1.1" stroke-linecap="butt"/>
<line x1="255.40" y1="5.20" x2="255.40" y2="26.80" stroke="#000" stroke-width="1.2" stroke-linecap="butt"/>
<line x1="253.00" y1="14.36" x2="257.80" y2="18.44" stroke="#1c2cf5" stroke-width="1.1" stroke-linecap="butt"/>
<line x1="253.00" y1="18.44" x2="257.80" y2="14.36" stroke="#1c2cf5" stroke-width="1.1" stroke-linecap="butt"/>
<line x1="276.70" y1="12.50" x2="282.50" y2="6.25" stroke="#000" stroke-width="1.2" stroke-linecap="butt"/>
<line x1="273.30" y1="23.75" x2="286.70" y2="10.40" stroke="#000" stroke-width="1.2" stroke-linecap="butt"/>
<line x1="281.70" y1="23.75" x2="290.80" y2="14.20" stroke="#000" stroke-width="1.2" stroke-linecap="butt"/>
<line x1="276.70" y1="12.50" x2="281.70" y2="23.75" stroke="#000" stroke-width="1.2" stroke-linecap="butt"/>
<line x1="274.30" y1="12.50" x2="279.10" y2="12.50" stroke="#1c2cf5" stroke-width="1.1" stroke-linecap="butt"/>
<line x1="276.70" y1="10.10" x2="276.70" y2="14.90" stroke="#1c2cf5" stroke-width="1.1" stroke-linecap="butt"/>
<line x1="270.90" y1="23.75" x2="275.70" y2="23.75" stroke="#1c2cf5" stroke-width="1.1" stroke-linecap="butt"/>
<line x1="273.30" y1="21.35" x2="273.30" y2="26.15" stroke="#1c2cf5" stroke-width="1.1" stroke-linecap="butt"/>
<line x1="279.30" y1="23.75" x2="284.10" y2="23.75" stroke="#1c2cf5" stroke-width="1.1" stroke-linecap="butt"/>
<line x1="281.70" y1="21.35" x2="281.70" y2="26.15" stroke="#1c2cf5" stroke-width="1.1" stroke-linecap="butt"/>
<line x1="300.8" y1="10.4" x2="313.8" y2="10.4" stroke="#000" stroke-width="1"/>
<line x1="300.8" y1="12.6" x2="313.8" y2="12.6" stroke="#000" stroke-width="1" stroke-dasharray="2.2 1.2 7.6 2"/>
<line x1="300.8" y1="15" x2="313.8" y2="15" stroke="#000" stroke-width="1" stroke-dasharray="3.4 1.2 3.4 1.6 3.4"/>
<line x1="300.8" y1="17.2" x2="313.8" y2="17.2" stroke="#000" stroke-width="1" stroke-dasharray="2.2 1.2 1.8 4.6 3.2"/>
<line x1="300.8" y1="19.6" x2="313.8" y2="19.6" stroke="#000" stroke-width="1" stroke-dasharray="0 2.5 2.6 3.3 4.6"/>
<line x1="300.8" y1="21.7" x2="313.8" y2="21.7" stroke="#000" stroke-width="1"/>
<line x1="296.25" y1="25.00" x2="298.33" y2="22.50" stroke="#3fae12" stroke-width="1.0" stroke-linecap="round"/>
<line x1="298.33" y1="22.50" x2="300.00" y2="26.67" stroke="#ee2e1a" stroke-width="1.0" stroke-linecap="round"/>
<line x1="300.00" y1="26.67" x2="303.33" y2="20.00" stroke="#3fae12" stroke-width="1.0" stroke-linecap="round"/>
<line x1="303.33" y1="20.00" x2="306.67" y2="17.92" stroke="#3fae12" stroke-width="1.0" stroke-linecap="round"/>
<line x1="306.67" y1="17.92" x2="309.17" y2="15.42" stroke="#3fae12" stroke-width="1.0" stroke-linecap="round"/>
<line x1="309.17" y1="15.42" x2="310.83" y2="17.08" stroke="#ee2e1a" stroke-width="1.0" stroke-linecap="round"/>
<line x1="310.83" y1="17.08" x2="313.75" y2="12.50" stroke="#3fae12" stroke-width="1.0" stroke-linecap="round"/>
<line x1="313.75" y1="12.50" x2="317.50" y2="5.42" stroke="#3fae12" stroke-width="1.0" stroke-linecap="round"/>
<line x1="322.50" y1="17.92" x2="323.33" y2="13.75" stroke="#3fae12" stroke-width="1.0" stroke-linecap="round"/>
<line x1="323.33" y1="13.75" x2="326.25" y2="23.33" stroke="#ee2e1a" stroke-width="1.0" stroke-linecap="round"/>
<line x1="326.25" y1="23.33" x2="329.58" y2="14.58" stroke="#3fae12" stroke-width="1.0" stroke-linecap="round"/>
<line x1="329.58" y1="14.58" x2="332.08" y2="21.25" stroke="#ee2e1a" stroke-width="1.0" stroke-linecap="round"/>
<line x1="332.08" y1="21.25" x2="337.08" y2="7.92" stroke="#3fae12" stroke-width="1.0" stroke-linecap="round"/>
<line x1="337.08" y1="7.92" x2="340.00" y2="16.25" stroke="#ee2e1a" stroke-width="1.0" stroke-linecap="round"/>
<line x1="340.00" y1="16.25" x2="343.33" y2="7.08" stroke="#3fae12" stroke-width="1.0" stroke-linecap="round"/>
<line x1="322.10" y1="20.40" x2="343.75" y2="10.40" stroke="#000" stroke-width="1.1" stroke-linecap="butt"/>
<path d="M351.6 8.7H366.3V20.8L363.8 23.2H351.6Z" fill="#fff" stroke="#000" stroke-width="1.400" stroke-linejoin="round"/>
<path d="M366.4 21.2H364.2V23.400" fill="#ddd" stroke="#555" stroke-width="0.6"/>
<text x="358.8" y="20.2" font-family="Liberation Serif, serif" font-weight="bold" font-size="13" text-anchor="middle" fill="#000">T</text>
<g transform="translate(385,16)"><line x1="-5" y1="-5.500" x2="6.500" y2="6.500" stroke="#8e8e8e" stroke-width="4.200" stroke-linecap="round"/><line x1="-5" y1="-5.500" x2="6.500" y2="6.500" stroke="#f3f3f3" stroke-width="2.800" stroke-linecap="round"/><circle cx="-5.6" cy="-6.2" r="3" fill="#f0f0f0" stroke="#8e8e8e" stroke-width="0.8"/><circle cx="-6.9" cy="-7.600" r="1.900" fill="#cedbe5"/><line x1="-6.9" y1="-7.600" x2="-10" y2="-11" stroke="#cedbe5" stroke-width="2.600"/><line x1="-6" y1="6" x2="3" y2="-3" stroke="#7d7d7d" stroke-width="3.600" stroke-linecap="round"/><line x1="-6" y1="6" x2="2" y2="-2" stroke="#e3e3e3" stroke-width="2.200" stroke-linecap="round"/><g transform="rotate(45 5 -4)"><rect x="0.500" y="-7" width="9" height="5.500" fill="#000"/></g></g>
<line x1="406.40" y1="21.50" x2="416.50" y2="11.40" stroke="#000" stroke-width="1.2" stroke-linecap="butt"/>
<rect x="404.9" y="20" width="3" height="3" fill="#1c2cf5"/><rect x="415" y="9.9" width="3" height="3" fill="#1c2cf5"/>
<line x1="408.60" y1="13.60" x2="414.40" y2="19.40" stroke="#1c2cf5" stroke-width="1.2" stroke-linecap="butt"/>
<path d="M407.800 12.800h3.200l-3.200 3.200zM415.200 20.200h-3.200l3.200-3.200z" fill="#1c2cf5"/>
<line x1="428.30" y1="20.40" x2="441.70" y2="7.30" stroke="#000" stroke-width="1.2" stroke-linecap="butt"/>
<line x1="432.10" y1="24.60" x2="445.80" y2="11.25" stroke="#1c2cf5" stroke-width="1.2" stroke-linecap="butt"/>
<line x1="431.25" y1="10.40" x2="438.40" y2="17.50" stroke="#1c2cf5" stroke-width="1.2" stroke-linecap="butt"/>
<path d="M439.400 18.500l-4.600-1 3.600-3.600z" fill="#1c2cf5"/>
<defs><linearGradient id="tr" x1="0" y1="0" x2="1" y2="0"><stop offset="0" stop-color="#8d8d8d"/><stop offset="0.35" stop-color="#f2f2f2"/><stop offset="0.6" stop-color="#c9c9c9"/><stop offset="1" stop-color="#7c7c7c"/></linearGradient></defs>
<path d="M457.300 13.200L458.200 22.600Q462.900 24.800 467.600 22.600L468.500 13.200Z" fill="url(#tr)" stroke="#6f6f6f" stroke-width="0.7"/>
<ellipse cx="462.900" cy="11.900" rx="6.800" ry="2.300" fill="url(#tr)" stroke="#666" stroke-width="0.7"/>
<path d="M460.900 9.800q2-2.600 4 0" fill="none" stroke="#111" stroke-width="1.300"/>
<line x1="460.3" y1="14.500" x2="460.3" y2="22.800" stroke="#777" stroke-width="0.8"/>
<line x1="462.9" y1="14.500" x2="462.9" y2="22.800" stroke="#777" stroke-width="0.8"/>
<line x1="465.5" y1="14.500" x2="465.5" y2="22.800" stroke="#777" stroke-width="0.8"/>
<defs><linearGradient id="ab" x1="0" y1="0" x2="0" y2="1"><stop offset="0" stop-color="#ffffff"/><stop offset="1" stop-color="#c9d8e2"/></linearGradient></defs>
<rect x="603.7" y="6.4" width="89.2" height="20" rx="3" ry="3" fill="#fff" stroke="#9aa7b1" stroke-width="1"/>
<line x1="605.7" y1="6.4" x2="690.9000000000001" y2="6.4" stroke="#7f8d98" stroke-width="1"/>
<text x="675.3" y="20" font-size="11" font-weight="bold" text-anchor="end" fill="#000">1000</text>
<rect x="676.3" y="8.600" width="14.300" height="7.600" rx="1.500" fill="url(#ab)"/><rect x="676.3" y="16.600" width="14.300" height="7.600" rx="1.500" fill="url(#ab)"/>
<path d="M680.800 13.400h5.800l-2.900-3.400zM680.800 18.400h5.800l-2.900 3.400z" fill="#000"/>
<rect x="694.8" y="6.4" width="109.4" height="20" rx="3" ry="3" fill="#fff" stroke="#9aa7b1" stroke-width="1"/>
<line x1="696.8" y1="6.4" x2="802.1999999999999" y2="6.4" stroke="#7f8d98" stroke-width="1"/>
<text x="698.2" y="20" font-size="11" font-weight="bold" fill="#000">(x) unités</text>
<rect x="787.4" y="9.200" width="14" height="14.500" rx="2" fill="url(#ab)"/><path d="M790.800 14.600h7.400l-3.700 4.300z" fill="#000"/>
<rect x="975.3" y="6.4" width="90.2" height="20" rx="3" ry="3" fill="#fff" stroke="#9aa7b1" stroke-width="1"/>
<line x1="977.3" y1="6.4" x2="1063.5" y2="6.4" stroke="#7f8d98" stroke-width="1"/>
<text x="979.5" y="20" font-size="11" font-weight="bold" fill="#000">5 minutes</text>
<rect x="1048.2" y="9.200" width="14.700" height="14.500" rx="2" fill="url(#ab)"/><path d="M1051.800 14.900h7.400l-3.700 4.300z" fill="#000"/>
<defs><linearGradient id="ib" x1="0" y1="0" x2="0" y2="1"><stop offset="0" stop-color="#ffffff"/><stop offset="1" stop-color="#e9e9e9"/></linearGradient></defs>
<rect x="1236.700" y="2.600" width="48.600" height="26.600" rx="3" fill="url(#ib)" stroke="#8796a2" stroke-width="1.200"/>
<line x1="1271.400" y1="3" x2="1271.400" y2="29" stroke="#8796a2" stroke-width="1.200"/>
<path d="M1274.800 15.100h7.300l-3.650 3.900z" fill="#000"/>
<line x1="1239.100" y1="26.500" x2="1269" y2="26.500" stroke="#2233e8" stroke-width="1"/>
<rect x="1240.1" y="22.1" width="3.800" height="3.9" fill="#3fae12"/>
<rect x="1245.1" y="24.1" width="3.800" height="1.9" fill="#e03020"/>
<rect x="1250.1" y="23.2" width="3.800" height="2.8" fill="#3fae12"/>
<rect x="1255.2" y="24.2" width="3.800" height="1.8" fill="#3fae12"/>
<rect x="1260.2" y="24.1" width="3.800" height="1.9" fill="#e03020"/>
<rect x="1265.1" y="21.1" width="3.800" height="4.9" fill="#3fae12"/>
<path d="M1239.300 17.500C1243 14 1247 6 1250.500 7.200S1255 22 1259 22S1266 12 1269 6.200" fill="none" stroke="#c83a30" stroke-width="1"/>
<path d="M1239.300 18C1243 22 1248 10.500 1253 10.200S1260 18.500 1263 18.500S1268 17 1269 15" fill="none" stroke="#3fae12" stroke-width="1"/>
<path d="M1242.700 5.400h3.200v3.300h3.300v3.200h-3.300v3.300h-3.200v-3.300h-3.300v-3.200h3.300z" fill="#fff" stroke="#7b8894" stroke-width="0.9"/>
<path d="M1260.300 7.400h2.400v3h1.500l-2.700 2.700-2.700-2.700h1.500z" fill="#e23a2c"/>
<path d="M1249.200 20.800h2.400v-3h1.500l-2.700-2.700-2.700 2.700h1.500z" fill="#3fae12"/>
<path d="M1436 1.500H1426.400L1418.500 6.400V26.500L1426.400 31.400H1436" fill="none" stroke="#8796a2" stroke-width="1"/>
<path d="M1421 17.400L1424.900 14.200V20.900Z" fill="#000"/>
<path d="M1435.500 6.100Q1430.800 6.500 1430.600 11.500" fill="none" stroke="#e2554a" stroke-width="1.800"/><path d="M1427.500 11.800h6.400l-3.200 4.200z" fill="#e2554a"/>
<path d="M1425.700 26.800Q1430.400 26.200 1430.600 21.200" fill="none" stroke="#3fae12" stroke-width="1.800"/><path d="M1427.500 21h6.400l-3.200-4.200z" fill="#3fae12"/>
</svg>
</body></html>
